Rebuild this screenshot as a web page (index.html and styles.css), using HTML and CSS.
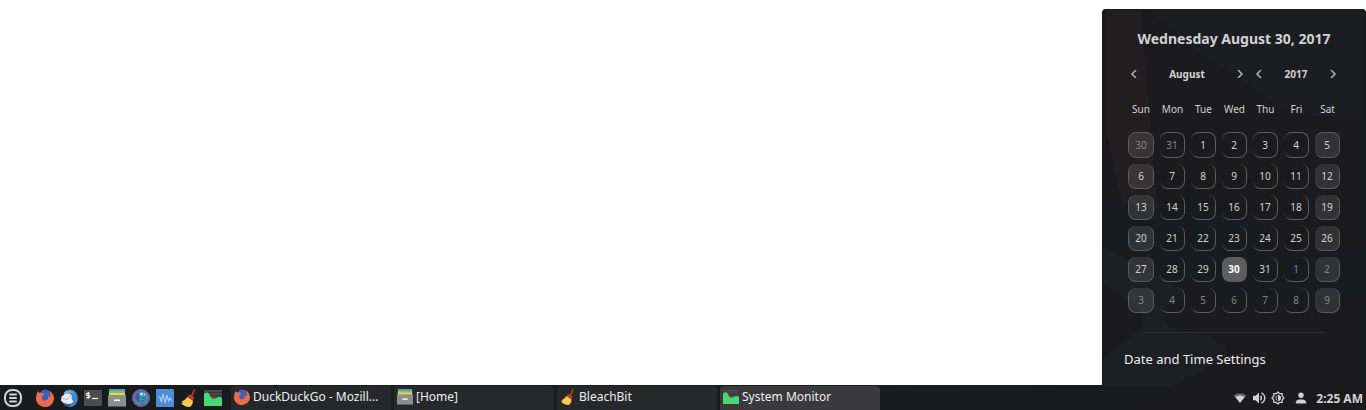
FILE: index.html
```html
<!DOCTYPE html>
<html lang="en">
<head>
<meta charset="utf-8">
<title>Desktop</title>
<link rel="stylesheet" href="styles.css">
</head>
<body>
<svg class="symbols" aria-hidden="true">
  <symbol id="firefox" viewBox="0 0 18 18">
    <circle cx="9" cy="9.3" r="7.5" fill="#3a5fc0"/>
    <path fill="#ee6c4a" d="M2 2.2 3.7 4.1C5 3.5 6 3.6 7 4L8.4 3 8 5.6 6.2 7.2C5.2 8.6 6 10.7 7.8 11.4 9.7 12 11.4 11.2 12 9.6 12.5 8 12 6.8 11.4 6 13 6.6 13.6 8 13.5 9.2 14.8 7.2 14.6 4 13 1.4 16 3 18 6 18 9.4 18 14.2 14 18 9 18S0 14 0 9.2C0 6.4.8 4.2 2 2.2Z"/>
    <path fill="#3a5fc0" d="M5 2.2C7.2.3 10.5.1 12.5 1.3 14 3 14.5 5.4 13.6 7.5L11.2 5.4 9.8 8.3 7.5 8.7 8.2 6 7 4Z"/>
  </symbol>
  <symbol id="files" viewBox="0 0 18 18">
    <path fill="#5596dc" d="M1 0h16v3H1z"/><path fill="#77c95e" d="M1 2h16v3H1z"/><path fill="#f4cf4c" d="M1 4h16v3H1z"/>
    <path fill="#8d8d8d" d="M0 6h18v11.5H0z"/><path fill="#fff" d="M6 10.5h6v1.6H6z"/>
  </symbol>
  <symbol id="broom" viewBox="0 0 18 18">
    <path fill="#c5362d" d="M13.8 0 15.4.8 12.7 7 14.2 9 12.8 11.2 7.4 7.7 9 5.6 11.4 6.1Z"/>
    <path fill="#fccb49" d="M7.2 8 12.8 11.5C13.3 14 12 16.5 9.8 18 6 18 3 16.6 1.2 14.2L3.1 13.5 1.4 12.5C4 11.8 6 10.2 7.2 8Z"/>
  </symbol>
  <symbol id="monitor" viewBox="0 0 18 18">
    <path fill="#4a4a4b" d="M0 1h18v16H0z"/><path stroke="#363637" d="M0 3.5h18M0 6.5h18"/>
    <path fill="#47d973" d="M0 17V5.5C1.5 3 4.2 2.8 5.5 5.5 6.6 8 7.5 9.6 10 9.8 12 10 13 7.8 15.2 8 16.5 8.1 17.5 8.8 18 9.4V17Z"/>
  </symbol>
</svg>

<main class="desktop">
  <section class="popup" aria-label="Calendar">
    <svg class="backdrop" viewBox="0 0 264 376" preserveAspectRatio="none" aria-hidden="true">
      <path fill="#211f20" d="M3 0H38L56 208 22 206 3 120Z"/>
      <path fill="#1c1d20" d="M45 0H264V110L190 105 100 45Z"/>
      <path fill="#181c1f" d="M0 190 60 200Q105 178 145 210L180 250 264 236V290L150 300 90 276 0 226Z"/>
      <path fill="#1d1f23" d="M0 235Q28 255 66 272L84 288Q54 296 62 310C70 326 96 322 112 330Q134 340 118 354L70 376H0V350L40 318 38 300 0 275Z"/>
    </svg>
    <h1 class="title">Wednesday August 30, 2017</h1>
    <div class="pickers">
      <div class="picker month">
        <button class="arrow" aria-label="Previous month"><svg viewBox="0 0 8 8"><path d="M6 0 2 4l4 4"/></svg></button>
        <span>August</span>
        <button class="arrow" aria-label="Next month"><svg viewBox="0 0 8 8"><path d="M2 0l4 4-4 4"/></svg></button>
      </div>
      <div class="picker year">
        <button class="arrow" aria-label="Previous year"><svg viewBox="0 0 8 8"><path d="M6 0 2 4l4 4"/></svg></button>
        <span>2017</span>
        <button class="arrow" aria-label="Next year"><svg viewBox="0 0 8 8"><path d="M2 0l4 4-4 4"/></svg></button>
      </div>
    </div>
    <table class="calendar">
      <thead><tr><th>Sun</th><th>Mon</th><th>Tue</th><th>Wed</th><th>Thu</th><th>Fri</th><th>Sat</th></tr></thead>
      <tbody>
        <tr><td class="other">30</td><td class="other">31</td><td>1</td><td>2</td><td>3</td><td>4</td><td>5</td></tr>
        <tr><td>6</td><td>7</td><td>8</td><td>9</td><td>10</td><td>11</td><td>12</td></tr>
        <tr><td>13</td><td>14</td><td>15</td><td>16</td><td>17</td><td>18</td><td>19</td></tr>
        <tr><td>20</td><td>21</td><td>22</td><td>23</td><td>24</td><td>25</td><td>26</td></tr>
        <tr><td>27</td><td>28</td><td>29</td><td class="today">30</td><td>31</td><td class="other">1</td><td class="other">2</td></tr>
        <tr><td class="other">3</td><td class="other">4</td><td class="other">5</td><td class="other">6</td><td class="other">7</td><td class="other">8</td><td class="other">9</td></tr>
      </tbody>
    </table>
    <hr class="divider">
    <a class="settings" href="#settings">Date and Time Settings</a>
  </section>
</main>

<footer class="taskbar">
  <button class="launcher menu" aria-label="Menu">
    <svg viewBox="0 0 18 18"><rect x="1" y="1" width="16" height="16" rx="7" fill="none" stroke="#d2d2d2" stroke-width="2"/><path stroke="#d2d2d2" stroke-width="2" stroke-linecap="round" d="M6 5.5h6M6 9h6M6 12.5h6"/></svg>
  </button>
  <nav class="launchers" aria-label="Launchers">
    <button class="launcher" aria-label="Firefox"><svg><use href="#firefox"/></svg></button>
    <button class="launcher" aria-label="Thunderbird">
      <svg viewBox="0 0 18 18"><path fill="#4386ca" d="M4 3.5C6.5-.2 12-.3 15 2.5 18.6 6 18.7 12 15.4 15.4 13 17.7 10 18.3 7 17L11.5 11Z"/><path fill="#6ab0ea" d="M3.5 4.5C6.5.5 11 .6 14 4L9.5 3.8 5 6.5Z"/><path fill="#e9edf2" d="M1.5 7.5 5 5 9.5 4.5 11.8 6.5 11.5 9.5 13.2 12.5 11.5 15 8 15.5 3.5 14.5 1 11.5Z"/><path fill="none" stroke="#b3bac4" d="M2 8.5 6.2 10.8 10.8 6.8"/><path fill="#2d5fa2" d="M1.5 12.2 5 14.5 10 15 12.5 14 9.5 17.8 5 16.8Z"/></svg>
    </button>
    <button class="launcher" aria-label="Terminal">
      <svg viewBox="0 0 18 18"><path fill="#4c4c4c" d="M0 1h18v16H0z"/><path fill="none" stroke="#eee" stroke-width="1.1" d="M6 4.2H3.4a1.1 1.1 0 0 0 0 2.2h1.4a1.1 1.1 0 0 1 0 2.2H2.4M4.3 3v7"/><path stroke="#eee" stroke-width="1.3" d="M8 9.5h6"/></svg>
    </button>
    <button class="launcher" aria-label="Files"><svg><use href="#files"/></svg></button>
    <button class="launcher" aria-label="Disk">
      <svg viewBox="0 0 18 18"><circle cx="9" cy="9" r="9" fill="#6e659c"/><circle cx="9" cy="9" r="6.4" fill="#36a0bd"/><path fill="#4a5691" d="M4 5 7.5 3.2 7 6.3 8.7 8.3 7 10.4 8.6 13.2 5.6 13 3 9Z"/><path fill="none" stroke="#3c668f" stroke-width="1.3" d="M9 8.3 13.4 9.3 12 12.5 9 11.3M8 14.2l3.7-.1"/><circle cx="9.4" cy="5.1" r="1.3" fill="#bceef4"/><circle cx="12.6" cy="5.2" r=".8" fill="#c7edf2"/></svg>
    </button>
    <button class="launcher" aria-label="Activity">
      <svg viewBox="0 0 18 18"><rect width="18" height="18" rx="1" fill="#4b8dd8"/><path fill="none" stroke="#a9d1f8" stroke-width="1.1" d="M2 8h2l1.5 5L7 4.5 9 14l2-8 1.5 6L14 9l1 2h1.5"/></svg>
    </button>
    <button class="launcher" aria-label="BleachBit"><svg><use href="#broom"/></svg></button>
    <button class="launcher" aria-label="System Monitor"><svg><use href="#monitor"/></svg></button>
  </nav>
  <div class="tasks">
    <button class="task"><svg><use href="#firefox"/></svg><span>DuckDuckGo - Mozill...</span></button>
    <button class="task"><svg><use href="#files"/></svg><span>[Home]</span></button>
    <button class="task"><svg><use href="#broom"/></svg><span>BleachBit</span></button>
    <button class="task active"><svg><use href="#monitor"/></svg><span>System Monitor</span></button>
  </div>
  <div class="tray">
    <button class="status" aria-label="Network"><svg viewBox="0 0 14 14"><path fill="#68686a" d="M.5 4.6Q7-.2 13.5 4.6L7 12Z"/><path fill="#d0d0d0" d="M2.4 6Q7 2.8 11.6 6L7 12Z"/></svg></button>
    <button class="status" aria-label="Volume"><svg viewBox="0 0 14 14"><path fill="#d0d0d0" d="M1 4.7h2.6L7 1.5v11L3.6 9.3H1z"/><path fill="none" stroke="#d0d0d0" stroke-width="1.4" d="M8.5 4.8q1.8 2.2 0 4.4M9.3 1.8c4.6 2.2 4.6 8.2 0 10.4"/></svg></button>
    <button class="status" aria-label="Brightness"><svg viewBox="0 0 14 14"><path fill="none" stroke="#d0d0d0" stroke-width="1.3" stroke-linejoin="round" d="m7 1 1.7 1.7 2.5 0v2.4L13 7l-1.8 1.9v2.4H8.7L7 13l-1.7-1.7H2.8V8.9L1 7l1.8-1.9V2.7h2.5Z"/><path fill="#d0d0d0" d="M7 4a3 3 0 0 1 0 6z"/><path stroke="#d0d0d0" d="M6.5 4.4a3 3 0 0 0 0 5.2" fill="none"/></svg></button>
    <button class="status user" aria-label="User"><svg viewBox="0 0 14 14"><circle cx="7" cy="4.3" r="2.7" fill="#d0d0d0"/><path fill="#d0d0d0" d="M1.8 12.5V11Q2.4 8.4 5 8.4H9Q11.6 8.4 12.2 11v1.5Z"/></svg></button>
    <time class="clock">2:25 AM</time>
  </div>
</footer>
</body>
</html>
```
FILE: styles.css
```css
* { box-sizing: border-box; }

body {
  margin: 0;
  min-height: 100vh;
  display: flex;
  flex-direction: column;
  background: #fff;
  color: #d2d2d2;
  font-family: "Noto Sans", sans-serif;
  font-size: 12px;
}

button {
  padding: 0;
  border: 0;
  background: none;
  color: inherit;
  font: inherit;
}

svg { display: block; }

.symbols {
  position: absolute;
  width: 0;
  height: 0;
}

.desktop {
  flex: 1;
  display: flex;
  justify-content: flex-end;
  align-items: flex-end;
}

.popup {
  position: relative;
  isolation: isolate;
  display: flex;
  flex-direction: column;
  align-items: center;
  padding: 20px 19px 17px;
  overflow: hidden;
  border: solid #151617;
  border-width: 1px 1px 0;
  border-radius: 4px 4px 0 0;
  background: #1b1b1d;
}

.backdrop {
  position: absolute;
  inset: 0;
  z-index: -1;
  width: 100%;
  height: 100%;
}

.title {
  margin: 0;
  font-size: 14px;
  line-height: 18px;
  font-weight: 700;
}

.pickers {
  align-self: stretch;
  display: flex;
  gap: 5px;
  margin-top: 17px;
  padding: 0 6px 0 5px;
  font-size: 10px;
  line-height: 18px;
  font-weight: 700;
}

.picker {
  display: flex;
  justify-content: space-between;
  align-items: center;
}

.month { flex: 15; }
.year { flex: 11; }

.arrow {
  width: 14px;
  padding: 3px;
}

.arrow svg {
  width: 8px;
  height: 8px;
  fill: none;
  stroke: #b2b2b4;
  stroke-width: 1.5;
}

.calendar {
  margin-top: 10px;
  border-spacing: 6px;
  table-layout: fixed;
  font-size: 10px;
  line-height: 14px;
  text-align: center;
}

.calendar th {
  width: 25px;
  padding: 3px 0 10px;
  font-weight: 400;
}

.calendar td {
  height: 25px;
  padding: 0;
  border: 1px solid #5b5b5d;
  border-width: 0 1px 1px 0;
  border-radius: 8px;
}

.calendar th:first-child { width: 26px; }
.calendar tbody tr:first-child td { height: 26px; border-top-width: 1px; }
.calendar td:first-child { border-left-width: 1px; }
.calendar td:first-child,
.calendar td:last-child { background: rgb(255 255 255 / 10%); }
.calendar .other { color: #848486; }

.calendar .today {
  border-color: #5e5e5e;
  background: #5e5e5e;
  color: #fff;
  font-weight: 700;
}

.divider {
  width: 180px;
  margin: 13px 0 0;
  border: 0;
  border-top: 1px solid #303032;
}

.settings {
  align-self: flex-start;
  margin: 17px 0 0 2px;
  color: #eee;
  font-size: 13px;
  line-height: 18px;
  text-decoration: none;
}

.taskbar {
  display: flex;
  align-items: stretch;
  padding-top: 1px;
  background: linear-gradient(90deg, #181c1f, #1b1c1e 60%, #1a1a1c);
}

.launchers {
  display: flex;
  gap: 6px;
  margin: 0 9px 0 14px;
}

.launcher svg {
  width: 18px;
  height: 18px;
}

.menu { margin-left: 4px; }

.tasks {
  flex: 1;
  display: flex;
  gap: 3px;
}

.task {
  flex: 0 1 160px;
  display: flex;
  align-items: center;
  gap: 3px;
  min-width: 0;
  padding: 0 3px 2px;
  border-radius: 4px 4px 0 0;
  background: #272829;
  color: #eee;
  line-height: 22px;
  white-space: nowrap;
}

.task svg {
  flex: none;
  width: 16px;
  height: 16px;
}

.active { background: #3a3a3c; }

.tray {
  display: flex;
  align-items: center;
  gap: 5px;
  padding-right: 3px;
}

.status svg {
  width: 14px;
  height: 14px;
}

.user { margin: 0 3px 0 4px; }

.clock { font-weight: 700; }
```
